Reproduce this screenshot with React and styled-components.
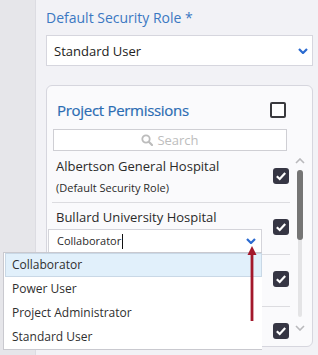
import styled, { createGlobalStyle } from "styled-components";

const GlobalStyle = createGlobalStyle`
  html, body {
    margin: 0;
    padding: 0;
  }
  body {
    width: 318px;
    height: 355px;
    overflow: hidden;
    background: #f2f2f6;
    font-family: "Open Sans", "Liberation Sans", sans-serif;
    color: #333;
  }
  svg {
    display: block;
  }
`;

const Page = styled.div`
  position: relative;
  display: flex;
  height: 355px;
`;

const SideRail = styled.div`
  width: 35px;
  flex-shrink: 0;
  background: #e6e6ea;
  border-right: 1px solid #dcdce2;
`;

const Main = styled.main`
  flex: 1;
  min-width: 0;
  padding: 8px 5px 0 10px;
`;

const FieldLabel = styled.label`
  display: block;
  font-size: 14px;
  line-height: 20px;
  color: #3b78c2;
  margin-bottom: 7px;
`;

const RoleSelect = styled.div`
  display: flex;
  align-items: center;
  justify-content: space-between;
  box-sizing: border-box;
  height: 31px;
  padding: 0 4px 0 7px;
  background: #fff;
  border: 1px solid #d6d6de;
  font-size: 13px;
  color: #222;
`;

const Card = styled.section`
  box-sizing: border-box;
  height: 262px;
  margin-top: 19px;
  padding: 13px 7px 0 5px;
  background: #fafafc;
  border: 1px solid #d6d6de;
  border-radius: 6px;
`;

const CardHeader = styled.div`
  display: flex;
  align-items: center;
  justify-content: space-between;
  height: 21px;
  padding-left: 5px;
  margin-right: 19px;
`;

const CardTitle = styled.h2`
  margin: 0;
  font-size: 15px;
  font-weight: 400;
  letter-spacing: -0.3px;
  color: #2b6cb3;
  -webkit-text-stroke: 0.2px #2b6cb3;
`;

const Checkbox = styled.span`
  display: flex;
  align-items: center;
  justify-content: center;
  box-sizing: border-box;
  width: 16px;
  height: 16px;
  flex-shrink: 0;
  border-radius: ${(p) => (p.$checked ? "3px" : "2px")};
  background: ${(p) => (p.$checked ? "#363644" : "#fff")};
  border: ${(p) => (p.$checked ? "none" : "2px solid #3a3a3e")};
`;

const SearchBox = styled.div`
  display: flex;
  align-items: center;
  justify-content: center;
  gap: 4px;
  box-sizing: border-box;
  height: 22px;
  margin: 9px 18px 0 1px;
  background: #fff;
  border: 1px solid #cfcfd4;
  font-size: 13px;
  color: #bdbdbd;
`;

const ListBody = styled.div`
  display: flex;
  gap: 5px;
  margin-top: 1px;
`;

const Items = styled.ul`
  flex: 1;
  margin: 0;
  padding: 0;
  list-style: none;
`;

const Item = styled.li`
  display: flex;
  align-items: flex-start;
  justify-content: space-between;
  padding: 5px 1px ${(p) => (p.$compact ? "1px" : "5px")} 4px;
  border-bottom: 1px solid #dcdce0;

  &:last-child {
    border-bottom: none;
  }
`;

const ItemText = styled.div`
  display: flex;
  flex-direction: column;
`;

const ItemName = styled.div`
  font-size: 13px;
  line-height: 18px;
  color: #2a2a2a;
`;

const ItemNote = styled.div`
  margin-top: 4px;
  font-size: 11px;
  line-height: 18px;
  color: #2a2a2a;
`;

/* rows that sit entirely under the open menu */
const CoveredRow = styled.div`
  height: 45px;
`;

const ItemCheck = styled(Checkbox)`
  margin-top: 11px;
`;

const RoleField = styled.div`
  position: relative;
  display: flex;
  align-items: center;
  justify-content: space-between;
  box-sizing: border-box;
  width: 214px;
  height: 24px;
  margin: 3px 0 0 -8px;
  padding: 0 5px 0 8px;
  background: #fff;
  border: 1px solid #d4d4da;
  font-size: 11px;
  color: #2a2a2a;
`;

const Caret = styled.span`
  display: inline-block;
  width: 1px;
  height: 15px;
  margin-left: 1px;
  background: #111;
  vertical-align: middle;
`;

const Menu = styled.ul`
  position: absolute;
  z-index: 5;
  top: 100%;
  left: -46px;
  width: 259px;
  box-sizing: border-box;
  margin: 0;
  padding: 0 0 0 1px;
  list-style: none;
  background: #fff;
  border: 1px solid #c9c9cf;
  border-right: none;
`;

const MenuOption = styled.li`
  box-sizing: border-box;
  height: 24px;
  padding-left: 6px;
  font-size: 12px;
  line-height: 22px;
  color: #2f2f2f;
  background: ${(p) => (p.$active ? "#e1f0fb" : "#fff")};
  border: 1px solid ${(p) => (p.$active ? "#c9d8e6" : "transparent")};
`;

const ScrollBar = styled.div`
  display: flex;
  flex-direction: column;
  align-items: center;
  width: 10px;
  padding-top: 6px;
`;

const Track = styled.div`
  width: 4px;
  height: 147px;
  margin-top: 6px;
  border-radius: 2px;
  background: #e4e4e6;
`;

const Thumb = styled.div`
  width: 6px;
  height: 70px;
  margin-left: -1px;
  border-radius: 3px;
  background: #757575;
`;

const DownArrow = styled.div`
  margin-top: 8px;
`;

const Annotation = styled.svg`
  position: absolute;
  z-index: 10;
  left: 247px;
  top: 245px;
  pointer-events: none;
`;

const BoldChevron = () => (
  <svg width="10" height="6" viewBox="0 0 10 6">
    <path d="M1 1 L5 5 L9 1" fill="none" stroke="#2a6ad0" strokeWidth="2.2" />
  </svg>
);

const ThinChevron = ({ up }) => (
  <svg width="10" height="6" viewBox="0 0 10 6">
    <path
      d={up ? "M1 5 L5 1 L9 5" : "M1 1 L5 5 L9 1"}
      fill="none"
      stroke="#b9b9bc"
      strokeWidth="1.6"
    />
  </svg>
);

const Tick = () => (
  <svg width="16" height="16" viewBox="0 0 16 16">
    <path d="M3.8 8.3 L6.7 11 L12.2 5" fill="none" stroke="#fff" strokeWidth="2.2" />
  </svg>
);

const SearchIcon = () => (
  <svg width="12" height="12" viewBox="0 0 12 12">
    <circle cx="5" cy="5" r="3.7" fill="none" stroke="#bcbcbc" strokeWidth="1.8" />
    <path d="M7.8 7.8 L11 11" stroke="#bcbcbc" strokeWidth="2.2" strokeLinecap="round" />
  </svg>
);

const roles = ["Collaborator", "Power User", "Project Administrator", "Standard User"];

export default function App() {
  return (
    <>
      <GlobalStyle />
      <Page>
        <SideRail />
        <Main>
          <FieldLabel>Default Security Role *</FieldLabel>
          <RoleSelect>
            Standard User
            <BoldChevron />
          </RoleSelect>

          <Card>
            <CardHeader>
              <CardTitle>Project Permissions</CardTitle>
              <Checkbox />
            </CardHeader>
            <SearchBox>
              <SearchIcon />
              Search
            </SearchBox>

            <ListBody>
              <Items>
                <Item>
                  <ItemText>
                    <ItemName>Albertson General Hospital</ItemName>
                    <ItemNote>(Default Security Role)</ItemNote>
                  </ItemText>
                  <ItemCheck $checked>
                    <Tick />
                  </ItemCheck>
                </Item>
                <Item $compact>
                  <ItemText>
                    <ItemName>Bullard University Hospital</ItemName>
                    <RoleField>
                      <span>
                        Collaborator
                        <Caret />
                      </span>
                      <BoldChevron />
                      <Menu>
                        {roles.map((r, i) => (
                          <MenuOption key={r} $active={i === 0}>
                            {r}
                          </MenuOption>
                        ))}
                      </Menu>
                    </RoleField>
                  </ItemText>
                  <ItemCheck $checked>
                    <Tick />
                  </ItemCheck>
                </Item>
                <Item $compact>
                  <CoveredRow />
                  <ItemCheck $checked>
                    <Tick />
                  </ItemCheck>
                </Item>
                <Item $compact>
                  <CoveredRow />
                  <ItemCheck $checked>
                    <Tick />
                  </ItemCheck>
                </Item>
              </Items>

              <ScrollBar>
                <ThinChevron up />
                <Track>
                  <Thumb />
                </Track>
                <DownArrow>
                  <ThinChevron />
                </DownArrow>
              </ScrollBar>
            </ListBody>
          </Card>
        </Main>

        <Annotation width="10" height="78" viewBox="0 0 10 78">
          <path d="M5 1 L9.5 10 L0.5 10 Z" fill="#a3182b" />
          <rect x="3.6" y="9" width="2.8" height="67" fill="#a3182b" />
        </Annotation>
      </Page>
    </>
  );
}
